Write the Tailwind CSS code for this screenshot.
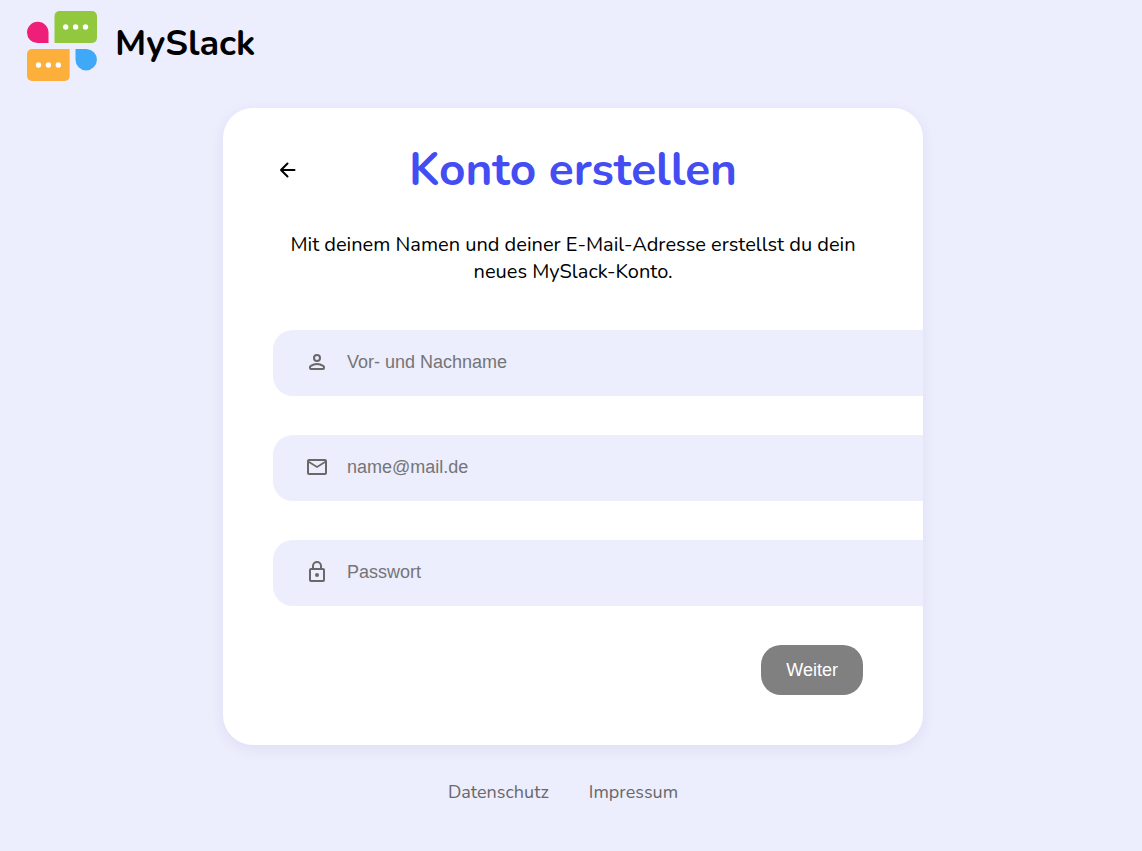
<!DOCTYPE html>
<html lang="de">
<head>
<meta charset="utf-8">
<meta name="viewport" content="width=device-width, initial-scale=1">
<title>MySlack – Konto erstellen</title>
<script src="https://cdn.jsdelivr.net/npm/@tailwindcss/browser@4"></script>
</head>
<body class="min-h-screen bg-[#ecedfd] font-[Nunito,Lato,sans-serif] text-black">
<header class="flex items-center gap-[18px] pt-[11px] pl-[27px]">
  <svg class="size-[70px]" viewBox="0 0 70 70" aria-hidden="true">
    <path d="M0 21.500a10.750 10.750 0 0 1 21.500 0V32H10.500A10.500 10.500 0 0 1 0 21.500Z" fill="#ee1e79"/>
    <path d="M32.500 0H65a5 5 0 0 1 5 5v22a5 5 0 0 1-5 5H27.500V5a5 5 0 0 1 5-5Z" fill="#92c83e"/>
    <path d="M5 38h37.700v27a5 5 0 0 1-5 5H5a5 5 0 0 1-5-5V43a5 5 0 0 1 5-5Z" fill="#fcb03b"/>
    <path d="M48.500 38h11A10.700 10.700 0 1 1 48.500 48.700Z" fill="#40a9f7"/>
    <g fill="#fff"><circle cx="38.700" cy="16" r="2.700"/><circle cx="48.600" cy="16" r="2.700"/><circle cx="58.500" cy="16" r="2.700"/><circle cx="11.500" cy="54" r="2.700"/><circle cx="21.400" cy="54" r="2.700"/><circle cx="31.300" cy="54" r="2.700"/></g>
  </svg>
  <span class="pb-1 text-4xl leading-[48px] font-bold">MySlack</span>
</header>
<main class="flex justify-center pt-[27px] pl-1">
  <section class="w-[700px] max-w-full overflow-hidden rounded-[30px] bg-white pt-8 pb-[50px] pl-[50px] shadow-[0_4px_14px_rgba(60,65,120,0.08)]">
    <div class="grid grid-cols-[30px_1fr_30px] items-center pr-[50px]">
      <button type="button" aria-label="Zurück" class="flex size-[30px] items-center justify-center">
        <svg class="size-6" viewBox="0 0 24 24" fill="none" stroke="#000" stroke-width="2" stroke-linecap="round" stroke-linejoin="round" aria-hidden="true"><path d="M18.500 12H5M11.500 5.500 5 12l6.500 6.500"/></svg>
      </button>
      <h1 class="text-center text-[46px] leading-[60px] font-bold text-[#444df2]">Konto erstellen</h1>
    </div>
    <p class="mt-[31px] pr-[50px] text-center text-xl leading-[27px]">Mit deinem Namen und deiner E-Mail-Adresse erstellst du dein<br>neues MySlack-Konto.</p>
    <form class="mt-[45px]">
      <div class="-mr-8 flex flex-col gap-[39px] font-[Liberation_Sans,Arial,sans-serif] text-lg text-[#686868]">
        <label class="flex h-[66px] items-center gap-[18px] rounded-[20px] bg-[#ecedfd] pb-0.5 pl-8">
          <svg class="size-6 shrink-0" viewBox="0 0 24 24" fill="none" stroke="currentColor" stroke-width="2" aria-hidden="true"><circle cx="12" cy="8" r="3"/><path d="M5 17.200c0-.5.300-1 .8-1.300C7.500 14.800 9.700 14 12 14s4.500.8 6.200 1.900c.5.300.8.800.8 1.300V18a1 1 0 0 1-1 1H6a1 1 0 0 1-1-1Z"/></svg>
          <input type="text" aria-label="Vor- und Nachname" placeholder="Vor- und Nachname" class="min-w-0 flex-1 outline-none placeholder:text-[#757575]">
        </label>
        <label class="flex h-[66px] items-center gap-[18px] rounded-[20px] bg-[#ecedfd] pb-0.5 pl-8">
          <svg class="size-6 shrink-0 fill-current" viewBox="0 0 24 24" aria-hidden="true"><path fill-rule="evenodd" d="M4 20a2 2 0 0 1-2-2V6a2 2 0 0 1 2-2h16a2 2 0 0 1 2 2v12a2 2 0 0 1-2 2Zm8-7L4 8v10h16V8Zm0-2 8-5H4ZM4 8V6v12Z"/></svg>
          <input type="email" aria-label="E-Mail-Adresse" placeholder="name@mail.de" class="min-w-0 flex-1 outline-none placeholder:text-[#757575]">
        </label>
        <label class="flex h-[66px] items-center gap-[18px] rounded-[20px] bg-[#ecedfd] pb-0.5 pl-8">
          <svg class="size-6 shrink-0 fill-current" viewBox="0 0 24 24" aria-hidden="true"><path fill-rule="evenodd" d="M6 22a2 2 0 0 1-2-2V10a2 2 0 0 1 2-2h1V6a5 5 0 0 1 10 0v2h1a2 2 0 0 1 2 2v10a2 2 0 0 1-2 2Zm0-2h12V10H6Zm6-3a2 2 0 1 0 0-4 2 2 0 0 0 0 4ZM9 8h6V6a3 3 0 0 0-6 0Z"/></svg>
          <input type="password" aria-label="Passwort" placeholder="Passwort" class="min-w-0 flex-1 outline-none placeholder:text-[#757575]">
        </label>
      </div>
      <div class="mt-[39px] flex justify-end pr-[60px]">
        <button type="submit" class="h-[50px] rounded-[20px] bg-[#808080] px-[25px] font-[Liberation_Sans,Arial,sans-serif] text-lg text-white">Weiter</button>
      </div>
    </form>
  </section>
</main>
<footer class="flex justify-center gap-10 pt-[34px] pr-4 pb-6 text-lg leading-[26px] text-[#686868]">
  <a href="#datenschutz">Datenschutz</a>
  <a href="#impressum">Impressum</a>
</footer>
</body>
</html>
